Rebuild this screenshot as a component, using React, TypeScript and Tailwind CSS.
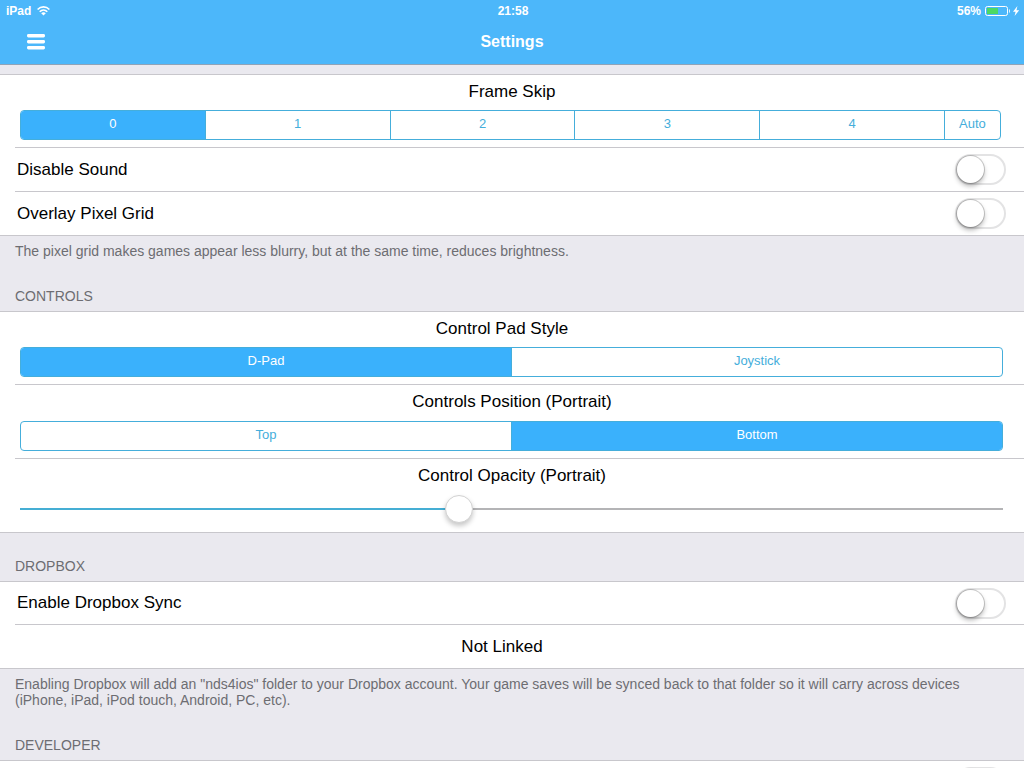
import { useId, useState, type ReactNode } from "react";

function StatusBar() {
  return (
    <div className="grid h-5 grid-cols-3 items-center pt-0.5 pr-1 pl-1.5 text-[12px] leading-4 font-bold">
      <div className="flex items-center gap-1.5">
        <span>iPad</span>
        <svg width="13" height="10" viewBox="0 0 13 10" fill="none" stroke="currentColor">
          <path d="M0.6 3.5C4 0 9 0 12.4 3.5" strokeWidth="1.6" />
          <path d="M2.7 5.7C4.9 3.5 8.1 3.5 10.3 5.7" strokeWidth="1.6" />
          <path d="M6.5 9.6L4.2 7.2C5.5 6 7.5 6 8.8 7.2Z" fill="currentColor" stroke="none" />
        </svg>
      </div>
      <span className="text-center">21:58</span>
      <div className="flex items-center justify-end gap-1">
        <span>56%</span>
        <svg width="35" height="10" viewBox="0 0 35 10">
          <rect x="0.5" y="0.5" width="22" height="9" rx="2" fill="none" stroke="white" />
          <rect x="2" y="2" width="11" height="6" fill="#4cd964" />
          <path d="M24 3V7C25.2 6.6 25.2 3.4 24 3Z" fill="white" />
          <path d="M32.4 0L28 5.8H30.6L29.6 10L34.2 4.2H31.5Z" fill="white" />
        </svg>
      </div>
    </div>
  );
}

function NavBar() {
  return (
    <header className="shrink-0 border-b border-[#8fa3b8] bg-[#4cb7fa] text-white">
      <StatusBar />
      <div className="grid h-11 grid-cols-3 items-center">
        <button aria-label="Menu" className="ml-[27px] w-[18px]">
          <svg width="18" height="16" viewBox="0 0 18 16" fill="currentColor" className="block">
            <rect width="18" height="3.4" rx="1.4" />
            <rect y="6" width="18" height="3.4" rx="1.4" />
            <rect y="12" width="18" height="3.4" rx="1.4" />
          </svg>
        </button>
        <h1 className="text-center text-[16px] font-bold">Settings</h1>
      </div>
    </header>
  );
}

function Group({ children }: { children: ReactNode }) {
  return <ul className="bg-white">{children}</ul>;
}

// separators are inset on the left, apart from the outer ones of a group
const rowStyle =
  "flex flex-col border-[#c8c7cc] pl-[15px] first:border-t last:border-b last:[&>div]:border-b-0";

function TallRow({ children }: { children: ReactNode }) {
  return (
    <li className={`${rowStyle} h-[74px]`}>
      <div className="flex flex-1 flex-col border-b border-[#c8c7cc] pb-[7px]">{children}</div>
    </li>
  );
}

function RowTitle({ children, className = "pr-[15px]" }: { children: ReactNode; className?: string }) {
  return (
    <span className={`min-h-0 flex-1 text-center text-[17px] leading-[33px] ${className}`}>
      {children}
    </span>
  );
}

function SegmentedRow({
  title,
  options,
  initial,
  titleClassName,
  className = "mr-[21px]",
}: {
  title: string;
  options: Array<string>;
  initial: string;
  titleClassName?: string;
  className?: string;
}) {
  const [selected, setSelected] = useState(initial);
  return (
    <TallRow>
      <RowTitle className={titleClassName}>{title}</RowTitle>
      <div
        role="group"
        aria-label={title}
        className={`ml-[5px] flex h-[30px] overflow-hidden rounded-[4px] border border-[#45aedb] ${className}`}
      >
        {options.map((option) => (
          <button
            key={option}
            aria-pressed={option === selected}
            onClick={() => setSelected(option)}
            className={`border-l border-[#45aedb] pb-0.5 text-[13px] first:border-l-0 ${
              option === "Auto" ? "w-[56px]" : "flex-1"
            } ${option === selected ? "bg-[#3ab1fc] text-white" : "text-[#45aedb]"}`}
          >
            {option}
          </button>
        ))}
      </div>
    </TallRow>
  );
}

function SliderRow({ title }: { title: string }) {
  const [value, setValue] = useState(0.445);
  const percent = value * 100;
  return (
    <TallRow>
      <RowTitle>{title}</RowTitle>
      <input
        type="range"
        aria-label={title}
        min={0}
        max={1}
        step="any"
        value={value}
        onChange={(e) => setValue(Number(e.target.value))}
        className="mr-[21px] mb-0.5 ml-[5px] h-7 appearance-none bg-[length:100%_2px] bg-center bg-no-repeat [&::-webkit-slider-thumb]:size-7 [&::-webkit-slider-thumb]:appearance-none [&::-webkit-slider-thumb]:rounded-full [&::-webkit-slider-thumb]:border [&::-webkit-slider-thumb]:border-[#d2d2d2] [&::-webkit-slider-thumb]:bg-white [&::-webkit-slider-thumb]:shadow-[0_3px_5px_rgba(0,0,0,0.22)]"
        style={{
          backgroundImage: `linear-gradient(to right, #45aed4 ${percent}%, #b4b4b6 ${percent}%)`,
        }}
      />
    </TallRow>
  );
}

function Switch({ id, label }: { id?: string; label?: string }) {
  return (
    <input
      id={id}
      type="checkbox"
      role="switch"
      aria-label={label}
      className="ml-auto h-[31px] w-[51px] appearance-none rounded-full border-2 border-[#e3e3e4] bg-white before:block before:size-[27px] before:rounded-full before:bg-white before:shadow-[0_0_0_1px_rgba(0,0,0,0.18),0_3px_5px_rgba(0,0,0,0.3)] checked:border-[#4cd964] checked:bg-[#4cd964] checked:before:ml-5"
    />
  );
}

function SwitchRow({ label }: { label?: string }) {
  const id = useId();
  return (
    <li className={`${rowStyle} h-11`}>
      <div className="flex flex-1 items-center border-b border-[#c8c7cc] pr-[18px] pl-0.5">
        {label && (
          <label htmlFor={id} className="text-[17px]">
            {label}
          </label>
        )}
        <Switch id={id} label={label ? undefined : "Developer"} />
      </div>
    </li>
  );
}

function SectionTitle({ children }: { children: ReactNode }) {
  return <h2 className="px-[15px] pb-1.5 text-[14px] leading-[18px] text-[#6d6d72]">{children}</h2>;
}

function Footnote({ children }: { children: ReactNode }) {
  return (
    <p className="px-[15px] pt-[7px] pb-7 text-[14px] leading-4 text-[#6d6d72]">
      {children}
    </p>
  );
}

export default function App() {
  return (
    <div className="flex h-screen flex-col bg-[#eae9ef] font-['Liberation_Sans',Arial,sans-serif] text-black">
      <NavBar />
      <main className="min-h-0 flex-1 overflow-y-auto pt-[9px] [scrollbar-width:none]">
        <Group>
          <SegmentedRow
            title="Frame Skip"
            options={["0", "1", "2", "3", "4", "Auto"]}
            initial="0"
            className="mr-[23px]"
          />
          <SwitchRow label="Disable Sound" />
          <SwitchRow label="Overlay Pixel Grid" />
        </Group>
        <Footnote>
          The pixel grid makes games appear less blurry, but at the same time, reduces brightness.
        </Footnote>

        <SectionTitle>CONTROLS</SectionTitle>
        <Group>
          <SegmentedRow
            title="Control Pad Style"
            options={["D-Pad", "Joystick"]}
            initial="D-Pad"
            titleClassName="pr-[35px]"
          />
          <SegmentedRow
            title="Controls Position (Portrait)"
            options={["Top", "Bottom"]}
            initial="Bottom"
          />
          <SliderRow title="Control Opacity (Portrait)" />
        </Group>

        <div className="pt-6">
          <SectionTitle>DROPBOX</SectionTitle>
        </div>
        <Group>
          <SwitchRow label="Enable Dropbox Sync" />
          <li className={`${rowStyle} h-11`}>
            <div className="flex flex-1 items-center justify-center border-b border-[#c8c7cc] pr-[35px] text-[17px]">
              Not Linked
            </div>
          </li>
        </Group>
        <Footnote>
          Enabling Dropbox will add an "nds4ios" folder to your Dropbox account. Your game saves
          will be synced back to that folder so it will carry across devices (iPhone, iPad, iPod
          touch, Android, PC, etc).
        </Footnote>

        <SectionTitle>DEVELOPER</SectionTitle>
        <Group>
          <SwitchRow />
        </Group>
      </main>
    </div>
  );
}
